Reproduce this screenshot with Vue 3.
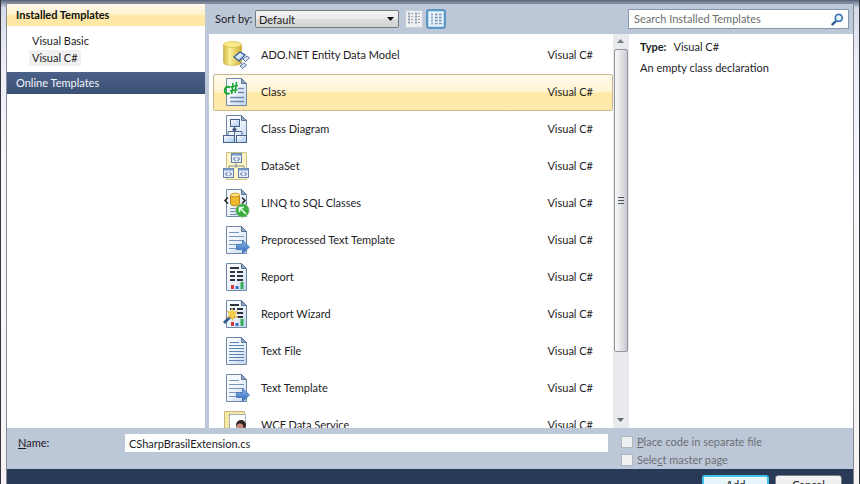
<script setup>
import { ref } from 'vue'

const items = [
  { name: 'ADO.NET Entity Data Model', icon: 'entity' },
  { name: 'Class', icon: 'class' },
  { name: 'Class Diagram', icon: 'diagram' },
  { name: 'DataSet', icon: 'dataset' },
  { name: 'LINQ to SQL Classes', icon: 'linq' },
  { name: 'Preprocessed Text Template', icon: 'template' },
  { name: 'Report', icon: 'report' },
  { name: 'Report Wizard', icon: 'wizard' },
  { name: 'Text File', icon: 'text' },
  { name: 'Text Template', icon: 'template' },
  { name: 'WCF Data Service', icon: 'wcf' },
]
const paged = ['class', 'diagram', 'linq', 'template', 'report', 'wizard', 'text']
const selected = ref('Class')
const fileName = ref('CSharpBrasilExtension.cs')
const search = ref('')
</script>

<template>
  <div class="shell">
    <svg class="defs" width="0" height="0" aria-hidden="true">
      <defs>
        <linearGradient id="paper" x1="0" y1="0" x2="1" y2="1">
          <stop offset="0" stop-color="#fdfeff" />
          <stop offset=".5" stop-color="#eef4fb" />
          <stop offset="1" stop-color="#bfd4ec" />
        </linearGradient>
        <linearGradient id="gold" x1="0" x2="1">
          <stop offset="0" stop-color="#d3b742" />
          <stop offset=".35" stop-color="#fbf09a" />
          <stop offset="1" stop-color="#d0ae34" />
        </linearGradient>
        <linearGradient id="arrow" x1="0" y1="0" x2="0" y2="1">
          <stop offset="0" stop-color="#8db9ee" />
          <stop offset="1" stop-color="#2b66b8" />
        </linearGradient>
        <linearGradient id="box" x1="0" y1="0" x2="1" y2="1">
          <stop offset="0" stop-color="#ffffff" />
          <stop offset="1" stop-color="#a9c5e8" />
        </linearGradient>
      </defs>
    </svg>

    <main class="dialog">
      <div class="workspace">
        <nav class="categories">
          <h2 class="cat-head active">Installed Templates</h2>
          <ul class="langs">
            <li><a href="#vb">Visual Basic</a></li>
            <li><a href="#cs" class="current">Visual C#</a></li>
          </ul>
          <h2 class="cat-head online">Online Templates</h2>
        </nav>

        <section class="right">
          <div class="toolbar">
            <label for="sort">Sort by:</label>
            <div class="select-wrap">
              <select id="sort"><option>Default</option></select>
              <svg class="caret" width="7" height="4" viewBox="0 0 7 4"><path d="M0 0h7L3.500 4z" fill="#111" /></svg>
            </div>
            <button class="view" type="button" aria-label="Small icons">
              <svg width="16" height="16" viewBox="0 0 16 16">
                <rect width="16" height="16" fill="#edeff1" />
                <path d="M2 2.500h2M2 5.500h2M2 8.500h2M2 11.500h2M9 2.500h2M9 5.500h2M9 8.500h2M9 11.500h2" stroke="#94a1b3" stroke-width="2" />
                <path d="M5 2.500h2M5 5.500h2M5 8.500h2M5 11.500h2M12 2.500h2M12 5.500h2M12 8.500h2M12 11.500h2" stroke="#a4a7a9" />
              </svg>
            </button>
            <button class="view pressed" type="button" aria-label="Medium icons" aria-pressed="true">
              <svg width="16" height="16" viewBox="0 0 16 16">
                <rect x="1" y="1" width="14" height="14" fill="#e6f1fa" />
                <path d="M3 3.500h2M3 6.500h2M3 9.500h2M3 12.500h2" stroke="#93b3d6" stroke-width="2" />
                <path d="M7 3.500h2.500M11 3.500h2.500M7 6.500h2.500M11 6.500h2.500M7 9.500h2.500M11 9.500h2.500M7 12.500h2.500M11 12.500h2.500" stroke="#7c8aab" stroke-width="1.600" />
              </svg>
            </button>
            <div class="search">
              <input v-model="search" type="text" aria-label="Search Installed Templates" placeholder="Search Installed Templates" />
              <svg class="lens" width="13" height="13" viewBox="0 0 13 13" fill="none">
                <path d="M5.500 7.500L1.500 11.300" stroke="#315c92" stroke-width="2.400" stroke-linecap="round" />
                <circle cx="7.800" cy="4.800" r="3.500" fill="#e6f3ff" stroke="#4279b2" stroke-width="1.700" />
              </svg>
            </div>
          </div>

          <div class="panes">
            <div class="list">
              <button
                v-for="item in items"
                :key="item.name"
                type="button"
                class="item"
                :class="{ selected: item.name === selected }"
                @click="selected = item.name"
              >
                <svg class="icon" width="28" height="30" viewBox="0 0 28 30" fill="none">
                  <template v-if="paged.includes(item.icon)">
                    <path d="M4.500 1.500h15l5 5v22h-20z" fill="url(#paper)" stroke="#6f88a8" />
                    <path d="M19.500 1.500v5h5z" fill="#8fa7c4" stroke="#5b7596" />
                  </template>

                  <template v-if="item.icon === 'entity'">
                    <path d="M1.500 4.500v18c0 4 18 4 18 0v-18z" fill="url(#gold)" stroke="#c3a740" stroke-width=".6" />
                    <ellipse cx="10.500" cy="4.500" rx="9" ry="3" fill="#f7e98a" stroke="#d6bc48" stroke-width=".7" />
                    <path d="M17 19h6M17 20l4 6" stroke="#6380a7" />
                    <path d="M12 17l6-5 5 3-6 6z" fill="url(#box)" stroke="#365e99" stroke-width="1.300" />
                    <path d="M21 19l4-3 2.500 2-4 3.500zM18 26l4-3 2.500 2-4 3.500z" fill="url(#box)" stroke="#5877a2" />
                  </template>

                  <template v-else-if="item.icon === 'class'">
                    <path d="M16 11.500h6M16 15.500h6M8 20.500h14M8 24.500h14" stroke="#7089ae" stroke-width="1.400" />
                    <path d="M8 10.500C5.500 8.500 2.700 10.500 2.700 13.300s2.500 4.500 5 2.700" stroke="#16a62b" stroke-width="1.900" />
                    <path d="M11 6l-1.300 11M14.500 5l-1.300 11M8.500 10l7.500-1.500M8 14l7.500-1.500" stroke="#16a62b" stroke-width="1.500" />
                  </template>

                  <template v-else-if="item.icon === 'diagram'">
                    <path d="M12.500 12v9M6 21v-3.500h14V21" stroke="#526b8f" />
                    <path d="M10 15.500l2.500-2.500 2.500 2.500-2.500 2.500z" fill="#465d81" />
                    <rect x="8.500" y="5.500" width="9" height="7" fill="url(#box)" stroke="#456390" />
                    <rect x="1.500" y="21.500" width="11" height="7" fill="url(#box)" stroke="#456390" />
                    <rect x="14.500" y="21.500" width="10" height="7" fill="url(#box)" stroke="#456390" />
                  </template>

                  <template v-else-if="item.icon === 'dataset'">
                    <path d="M4.500 1.500h20v27h-20z" fill="#fff6c8" stroke="#c9bd88" />
                    <path d="M14 11v6M7 17v-2h15v2" stroke="#858b8d" />
                    <g v-for="p in [[9, 2], [1, 17], [16, 17]]" :key="p[0]" :transform="`translate(${p[0]} ${p[1]})`">
                      <rect x=".5" y=".5" width="10" height="9" fill="#e4eefa" stroke="#6481aa" />
                      <path d="M1 1.500h9" stroke="#789ac7" stroke-width="2" />
                      <path d="M4.500 4L2.500 6l2 2M6.500 4l2 2-2 2" stroke="#3e5d91" />
                    </g>
                  </template>

                  <template v-else-if="item.icon === 'linq'">
                    <path d="M8 20.500h8M8 23.500h7M8 26.500h8" stroke="#7892b4" />
                    <path d="M6 9.500L3 12.500l3 3M20 9.500l3 3-3 3" stroke="#222" stroke-width="1.500" />
                    <path d="M8.500 7v8.500c0 3 9 3 9 0V7z" fill="#efb72c" stroke="#be8423" />
                    <ellipse cx="13" cy="7" rx="4.500" ry="1.800" fill="#ffe487" stroke="#cf9b32" />
                    <circle cx="20.500" cy="22.500" r="6.500" fill="#3bac3e" stroke="#74b775" />
                    <path d="M24 26l-6-6M17.500 24v-4.500h4.500" stroke="#eaffea" stroke-width="1.600" />
                  </template>

                  <template v-else-if="item.icon === 'template'">
                    <path d="M7 7.500h10M7 11.500h15M7 15.500h15M7 19.500h8M7 23.500h7" stroke="#7897bd" stroke-width="1.200" />
                    <path d="M14.500 19.500h6v-4l7 6.500-7 6.500v-4h-6z" fill="url(#arrow)" stroke="#4d7fbd" />
                  </template>

                  <template v-else-if="item.icon === 'report' || item.icon === 'wizard'">
                    <path d="M8 6h9M8 10h5M15 10h6M8 14h5M15 14h6M8 18h5M15 18h6" stroke="#30343c" stroke-width="1.800" />
                    <path d="M10.500 27v-4" stroke="#d53c3d" stroke-width="3" />
                    <path d="M15 27v-3" stroke="#3672c8" stroke-width="3" />
                    <path d="M20 27v-7" stroke="#35ac57" stroke-width="3" />
                    <template v-if="item.icon === 'wizard'">
                      <path d="M2 24l7-7" stroke="#355d91" stroke-width="3" />
                      <path d="M10 9l1.500 4 4-1-2.500 3.500 3 3-4-.5-1.500 4-1.500-4-4 .5 2.500-3L5 12l4 1z" fill="#f6cf46" stroke="#e3bd55" stroke-width=".7" />
                    </template>
                  </template>

                  <path v-else-if="item.icon === 'text'" d="M8 6.500h9M7 9.500h15M7 12.500h15M7 15.500h15M7 18.500h15M7 21.500h15M7 24.500h15" stroke="#5d83b5" />

                  <template v-else>
                    <path d="M2.500 1.500h20v27h-20z" fill="#f6e7a2" stroke="#c4b681" />
                    <path d="M7.500 4.500h16v24h-16z" fill="#fff" stroke="#8191a9" stroke-dasharray="2 1" />
                    <circle cx="19" cy="15" r="5" fill="#302724" />
                    <ellipse cx="18" cy="17.500" rx="3.500" ry="4" fill="#c88978" />
                  </template>
                </svg>
                <span class="item-name">{{ item.name }}</span>
                <span class="item-lang">Visual C#</span>
              </button>
            </div>

            <div class="scrollbar" aria-hidden="true">
              <svg width="7" height="4" viewBox="0 0 7 4"><path d="M0 4h7L3.500 0z" fill="#777b85" /></svg>
              <div class="thumb"><i></i><i></i><i></i></div>
              <svg width="7" height="4" viewBox="0 0 7 4"><path d="M0 0h7L3.500 4z" fill="#666a73" /></svg>
            </div>

            <aside class="details">
              <p><b>Type:</b>Visual C#</p>
              <p>An empty class declaration</p>
            </aside>
          </div>
        </section>
      </div>

      <form class="options" @submit.prevent>
        <label class="name-label" for="filename"><u>N</u>ame:</label>
        <input id="filename" v-model="fileName" class="name-input" type="text" />
        <div class="checks">
          <label><input type="checkbox" disabled /><span><u>P</u>lace code in separate file</span></label>
          <label><input type="checkbox" disabled /><span>Sele<u>c</u>t master page</span></label>
        </div>
      </form>

      <footer class="actions">
        <button type="button" class="primary"><u>A</u>dd</button>
        <button type="button">Cancel</button>
      </footer>
    </main>
  </div>
</template>

<style>
body {
  overflow: hidden;
}
</style>

<style scoped>
* {
  box-sizing: border-box;
}
.shell {
  height: 100vh;
  padding: 3px 5px 0 6px;
  border-left: 1px solid #38363c;
  border-right: 1px solid #30343b;
  background: linear-gradient(#526077 0, #8994a6 3px, #d5dae8 8px, #eeeef9 60px, #f8f7fb 180px, #f5f3f3 100%);
  font: 11px/16px Lato, "Open Sans", sans-serif;
  color: #1c1c1f;
  overflow: hidden;
}
.defs {
  position: absolute;
}
button,
input,
select {
  font: inherit;
  color: inherit;
  margin: 0;
  border-radius: 0;
}
.dialog {
  height: 100%;
  display: flex;
  flex-direction: column;
  border: solid #828792;
  border-width: 1px 1px 0 0;
  background: #bcc7d8;
  box-shadow: -1px 0 #858a94;
}
.workspace {
  flex: 1;
  min-height: 0;
  display: flex;
  gap: 4px;
}
.categories {
  flex: 0 0 198px;
  background: #fff;
}
.cat-head {
  margin: 0;
  padding: 0 9px;
  font-size: 11px;
  line-height: 22px;
}
.active {
  color: #111;
  background: linear-gradient(#fffaf0, #fff0c9 50%, #ffe8a6 51%, #ffe8a6);
}
.online {
  font-weight: 400;
  color: #f2f5fa;
  background: linear-gradient(#4b6188, #3c5175);
}
.langs {
  list-style: none;
  margin: 0;
  padding: 7px 22px 5px;
}
.langs li {
  height: 17px;
}
.langs a {
  display: inline-block;
  padding: 0 3px;
  color: inherit;
  text-decoration: none;
}
.langs .current {
  background: #f0f0f0;
}
.right {
  flex: 1;
  min-width: 0;
  display: flex;
  flex-direction: column;
}
.toolbar {
  flex: none;
  height: 30px;
  padding: 0 4px 0 6px;
  display: flex;
  align-items: center;
}
.toolbar label {
  width: 40px;
  white-space: nowrap;
}
.select-wrap {
  position: relative;
  width: 144px;
  margin-right: 6px;
}
.select-wrap select {
  display: block;
  appearance: none;
  width: 100%;
  height: 18px;
  padding: 0 3px;
  border: 1px solid #777b80;
  border-radius: 2px;
  background: linear-gradient(#f4f4f4, #ebebeb 50%, #dddddd 51%, #d2d2d2);
  line-height: 15px;
}
.caret {
  position: absolute;
  right: 5px;
  top: 7px;
  pointer-events: none;
}
.view {
  width: 18px;
  height: 18px;
  padding: 0;
  border: 1px solid #c5ced9;
  background: #f0f2f4;
  display: grid;
  place-items: center;
}
.view.pressed {
  width: 20px;
  height: 20px;
  margin-left: 3px;
  border: 2px solid #5e97c4;
  border-radius: 3px;
  background: #b7dcf3;
}
.search {
  width: 221px;
  height: 20px;
  margin-left: auto;
  padding: 0 4px 0 5px;
  display: flex;
  align-items: center;
  background: #fff;
  border: 1px solid #8797ad;
}
.search input {
  flex: 1;
  min-width: 0;
  padding: 0;
  border: 0;
  outline: 0;
  background: none;
}
.search input::placeholder {
  color: #6d6d6d;
  opacity: 1;
}
.panes {
  flex: 1;
  min-height: 0;
  display: flex;
}
.list {
  flex: 1;
  min-width: 0;
  padding: 3px 0 0 4px;
  background: #fff;
  overflow: hidden;
}
.item {
  width: 100%;
  height: 37px;
  padding: 0 19px 2px 8px;
  display: flex;
  align-items: center;
  border: 1px solid transparent;
  background: none;
  text-align: left;
}
.item.selected {
  border-color: #c9b98e;
  border-radius: 2px;
  background: linear-gradient(#fffbf0, #fff3d1 48%, #ffe8a6 52%, #ffeab0);
}
.icon {
  flex: none;
  margin-right: 11px;
}
.item-name {
  flex: 1;
}
.scrollbar {
  flex: none;
  width: 16px;
  padding: 5px 1px 6px 0;
  display: flex;
  flex-direction: column;
  align-items: center;
  background: #e9eaed;
}
.thumb {
  width: 14px;
  height: 303px;
  margin: 6px 0 auto;
  display: flex;
  flex-direction: column;
  align-items: center;
  justify-content: center;
  gap: 2px;
  border: 1px solid #92959b;
  border-radius: 2px;
  background: linear-gradient(90deg, #f8f8f8, #e5e6e8 45%, #c8cad0);
}
.thumb i {
  width: 6px;
  height: 1px;
  background: #50545d;
}
.details {
  width: 224px;
  padding: 5px 11px;
  background: #fff;
}
.details p {
  margin: 0 0 5px;
}
.details b {
  margin-right: 7px;
}
.options {
  flex: none;
  padding: 5px 11px 0;
  display: flex;
  align-items: flex-start;
}
.name-label {
  width: 107px;
  line-height: 20px;
}
.name-input {
  flex: 1;
  min-width: 0;
  height: 18px;
  margin-top: 1px;
  padding: 0 4px;
  border: 0;
  background: #fff;
}
.checks {
  width: 221px;
  margin: 0 0 0 13px;
  color: #6d6f75;
}
.checks label {
  height: 18px;
  display: flex;
  align-items: center;
  gap: 4px;
}
.checks input {
  appearance: none;
  width: 12px;
  height: 12px;
  border: 1px solid #b1b6be;
  background: #eef0f2;
}
.actions {
  flex: none;
  height: 15px;
  padding: 6px 11px 0;
  display: flex;
  align-items: flex-start;
  justify-content: flex-end;
  gap: 6px;
  overflow: hidden;
  background: #293a59;
}
.actions button {
  flex: none;
  width: 67px;
  height: 20px;
  padding: 0;
  line-height: 14px;
  border: 1px solid #777f8c;
  border-radius: 3px;
  background: linear-gradient(#f5f5f5, #e4e4e4);
}
.actions .primary {
  border: 2px solid #3fc3ea;
  background: linear-gradient(#eef8fc, #d8edf7);
}
</style>
